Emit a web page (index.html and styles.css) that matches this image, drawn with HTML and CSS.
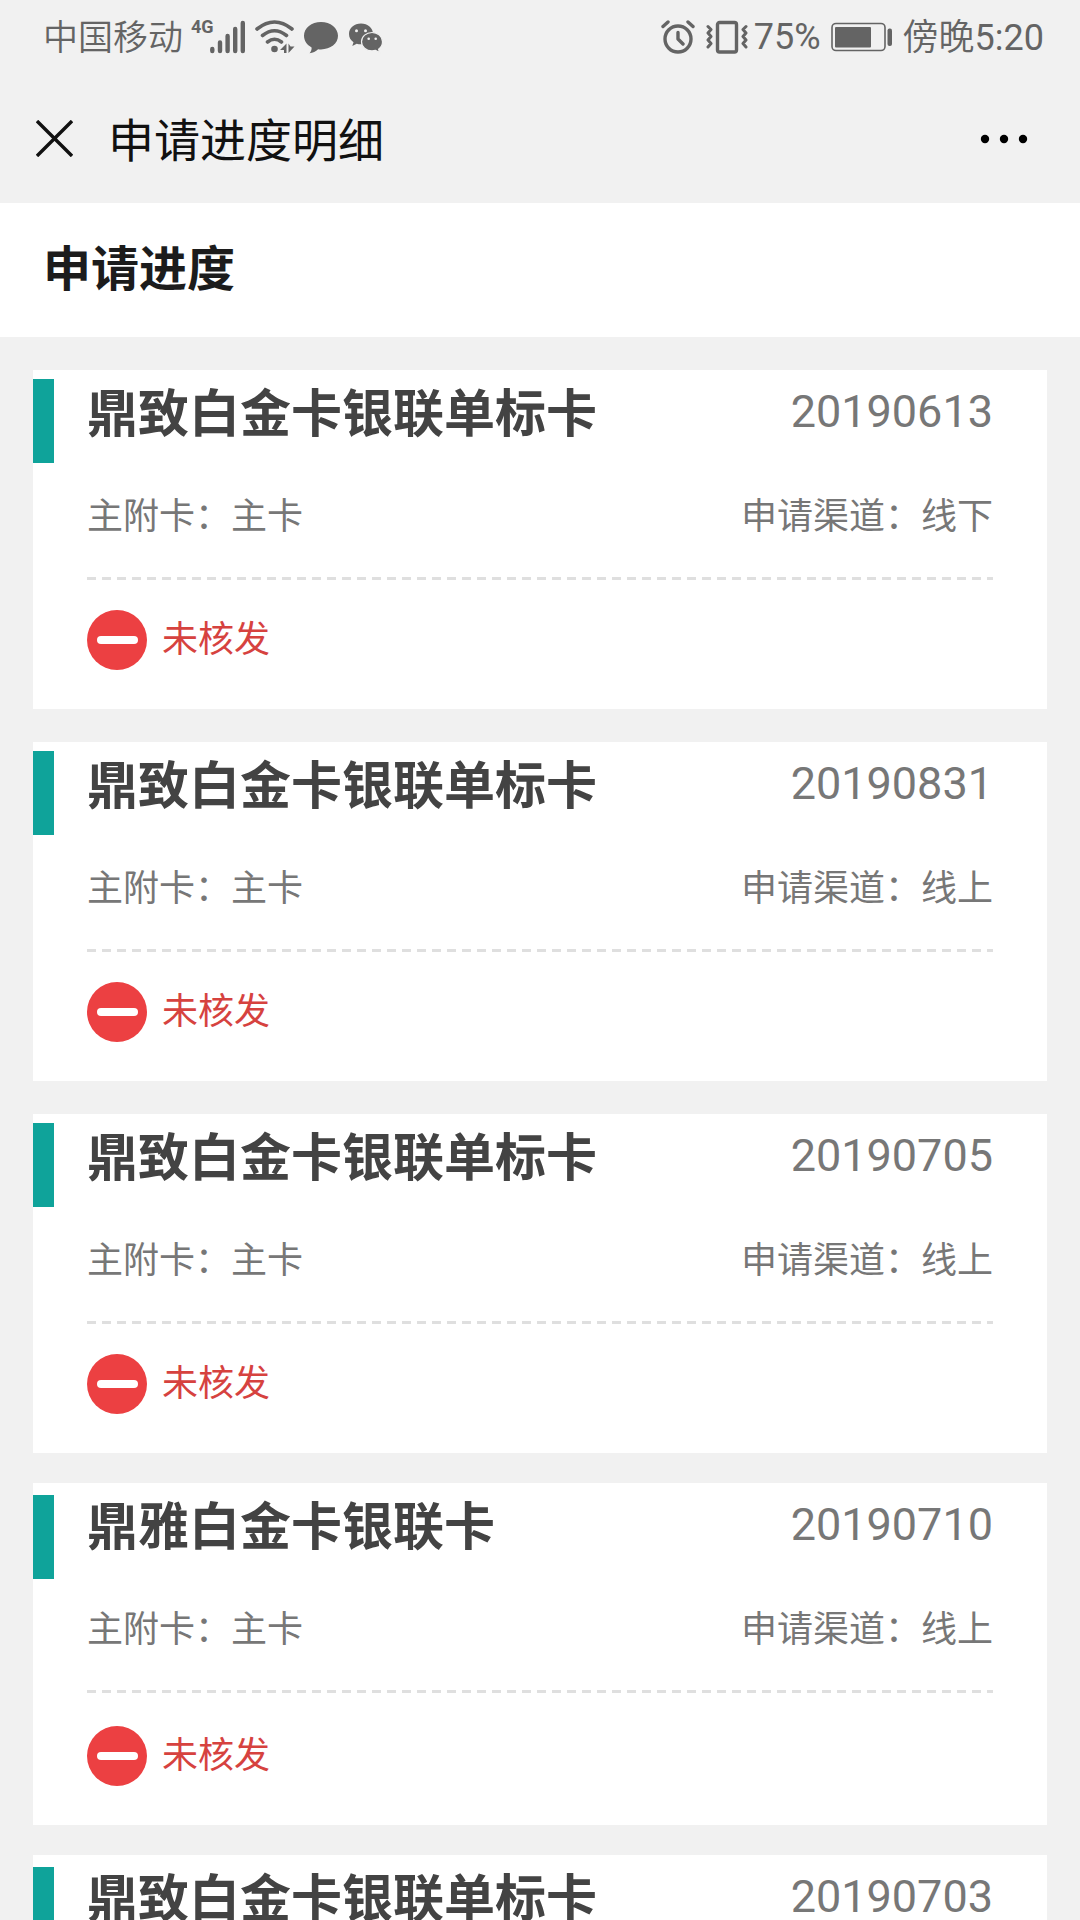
FILE: index.html
```html
<!DOCTYPE html>
<html lang="zh-CN">
<head>
<meta charset="utf-8">
<meta name="viewport" content="width=device-width, initial-scale=1">
<title>申请进度明细</title>
<link rel="stylesheet" href="styles.css">
</head>
<body>
<svg class="sprite" aria-hidden="true">
  <symbol id="icon-rejected" viewBox="0 0 60 60">
    <circle cx="30" cy="30" r="30" fill="#ec4042"/>
    <rect x="10" y="26" width="41" height="8" rx="4" fill="#fff"/>
  </symbol>
</svg>

<div class="statusbar">
  <div class="statusbar-side">
    <span class="carrier">中国移动</span>
    <span class="network">4G</span>
    <svg class="signal" width="35" height="34" viewBox="0 0 35 34" stroke="currentColor" stroke-width="4.4" stroke-linecap="round" aria-hidden="true">
      <path d="M2.3 29v2M10 22.5v8.5M17.6 16v15M25.2 9v22M32.8 3v28"/>
    </svg>
    <svg class="wifi" width="40" height="34" viewBox="0 0 40 34" fill="none" stroke="currentColor" stroke-width="3.6" stroke-linecap="round" aria-hidden="true">
      <path d="M2 9Q19.500-5 37 9M7.500 15.500q12-9.500 24 0M12.500 22q7-5.500 14 0"/>
      <circle cx="19.500" cy="29" r="3.300" fill="currentColor" stroke="none"/>
      <path d="M31.500 23.500v9.500h-2.500v-3h-4zM33.500 33v-9.500l2 3h4z" fill="currentColor" stroke="none"/>
    </svg>
    <svg class="bubble" width="34" height="34" viewBox="0 0 34 34" fill="currentColor" aria-hidden="true">
      <path d="M17 2C7.500 2 0 8 0 15.800c0 5 2.900 9.200 7.600 11.600.2 2-.6 4.200-2 5.900 3.200-.5 6.300-2 8.500-4.100 1 .2 1.900.2 2.900.2 9.500 0 17-5.900 17-13.600S26.500 2 17 2z"/>
    </svg>
    <svg class="wechat" width="34" height="34" viewBox="0 0 34 34" aria-hidden="true">
      <path fill="currentColor" d="M12 3.500C5.300 3.500 0 8 0 14c0 3.400 1.700 6.300 4.500 8.200L3.300 26l4.400-2.300c1.400.4 2.800.6 4.300.6 6.700 0 12-4.600 12-10.400S18.700 3.500 12 3.500z"/>
      <path fill="currentColor" stroke="#f1f1f1" stroke-width="1.200" d="M23 12.500c-5.800 0-10.500 4-10.500 9.200s4.700 9.200 10.500 9.200c1.300 0 2.500-.2 3.600-.5l4 2.200-1-3.400c2.400-1.700 3.900-4.400 3.900-7.500 0-5.200-4.700-9.200-10.500-9.200z"/>
      <g fill="#f1f1f1"><circle cx="7.500" cy="10.700" r="1.500"/><circle cx="16.500" cy="10.700" r="1.500"/><circle cx="19.700" cy="18.700" r="1.300"/><circle cx="26.700" cy="18.700" r="1.300"/></g>
    </svg>
  </div>
  <div class="statusbar-side">
    <svg class="alarm" width="34" height="34" viewBox="0 0 34 34" fill="none" stroke="currentColor" stroke-width="3.400" stroke-linecap="round" stroke-linejoin="round" aria-hidden="true">
      <circle cx="17" cy="19" r="13"/>
      <path d="M17 12.500v6.500l5 5M2 6.500l5-4.500M32 6.500l-5-4.500"/>
    </svg>
    <svg class="vibrate" width="42" height="34" viewBox="0 0 42 34" fill="none" stroke="currentColor" stroke-width="3.400" stroke-linecap="round" stroke-linejoin="round" aria-hidden="true">
      <rect x="11.500" y="2.500" width="19" height="29.500" rx="2"/>
      <path stroke-width="3" d="M2 6.500l3 3-3 3.500 3 3.500-3 3.500 3 3.500-3 3.500M40 6.500l-3 3 3 3.500-3 3.500 3 3.500-3 3.500 3 3.500"/>
    </svg>
    <span class="percent">75%</span>
    <svg class="battery" width="62" height="34" viewBox="0 0 62 34" fill="currentColor" aria-hidden="true">
      <rect x="1" y="3.500" width="53" height="27" rx="4" fill="none" stroke="currentColor" stroke-width="1.600"/>
      <rect x="4" y="7" width="36" height="20.500" rx="1"/>
      <rect x="56.500" y="8.500" width="4.500" height="17.500" rx="2"/>
    </svg>
    <span class="clock">傍晚<span class="digits">5:20</span></span>
  </div>
</div>

<header class="navbar">
  <button class="nav-button" type="button" aria-label="关闭">
    <svg width="37" height="37" viewBox="0 0 37 37" fill="none" stroke="#111" stroke-width="3.400" aria-hidden="true"><path d="M1 1l35 35M36 1L1 36"/></svg>
  </button>
  <h1 class="nav-title">申请进度明细</h1>
  <button class="nav-button" type="button" aria-label="更多">
    <svg width="48" height="10" viewBox="0 0 48 10" aria-hidden="true"><circle cx="5" cy="5" r="4.200"/><circle cx="24" cy="5" r="4.200"/><circle cx="43" cy="5" r="4.200"/></svg>
  </button>
</header>

<main>
  <h2 class="section-title">申请进度</h2>
  <div class="records">
    <article class="record">
      <div class="accent"></div>
      <div class="record-body">
        <div class="record-head"><h3 class="card-name">鼎致白金卡银联单标卡</h3><time class="date" datetime="2019-06-13">20190613</time></div>
        <div class="record-info"><span>主附卡：主卡</span><span>申请渠道：线下</span></div>
        <div class="record-status"><svg class="status-icon" aria-hidden="true"><use href="#icon-rejected"/></svg><span>未核发</span></div>
      </div>
    </article>
    <article class="record">
      <div class="accent"></div>
      <div class="record-body">
        <div class="record-head"><h3 class="card-name">鼎致白金卡银联单标卡</h3><time class="date" datetime="2019-08-31">20190831</time></div>
        <div class="record-info"><span>主附卡：主卡</span><span>申请渠道：线上</span></div>
        <div class="record-status"><svg class="status-icon" aria-hidden="true"><use href="#icon-rejected"/></svg><span>未核发</span></div>
      </div>
    </article>
    <article class="record">
      <div class="accent"></div>
      <div class="record-body">
        <div class="record-head"><h3 class="card-name">鼎致白金卡银联单标卡</h3><time class="date" datetime="2019-07-05">20190705</time></div>
        <div class="record-info"><span>主附卡：主卡</span><span>申请渠道：线上</span></div>
        <div class="record-status"><svg class="status-icon" aria-hidden="true"><use href="#icon-rejected"/></svg><span>未核发</span></div>
      </div>
    </article>
    <article class="record record-tall">
      <div class="accent"></div>
      <div class="record-body">
        <div class="record-head"><h3 class="card-name">鼎雅白金卡银联卡</h3><time class="date" datetime="2019-07-10">20190710</time></div>
        <div class="record-info"><span>主附卡：主卡</span><span>申请渠道：线上</span></div>
        <div class="record-status"><svg class="status-icon" aria-hidden="true"><use href="#icon-rejected"/></svg><span>未核发</span></div>
      </div>
    </article>
    <article class="record record-tall">
      <div class="accent"></div>
      <div class="record-body">
        <div class="record-head"><h3 class="card-name">鼎致白金卡银联单标卡</h3><time class="date" datetime="2019-07-03">20190703</time></div>
      </div>
    </article>
  </div>
</main>
</body>
</html>
```
FILE: styles.css
```css
* {
  box-sizing: border-box;
}

html {
  height: 100%;
  overflow: hidden;
}

body {
  height: 100%;
  margin: 0;
  overflow: hidden;
  background: #f1f1f1;
  color: #777;
  font-family: Roboto, "Noto Sans CJK SC", sans-serif;
  font-size: 36px;
}

h1,
h2,
h3 {
  margin: 0;
}

svg {
  display: block;
  flex: none;
}

.sprite {
  position: absolute;
  width: 0;
  height: 0;
}

/* System status bar */
.statusbar {
  display: flex;
  justify-content: space-between;
  height: 74px;
  padding: 0 36px 0 43px;
  color: #646464;
  font-weight: 350;
  line-height: 70px;
}

.statusbar-side {
  display: flex;
  align-items: center;
}

.carrier {
  padding-top: 4px;
  font-size: 35px;
}

.network {
  align-self: flex-start;
  margin: 16px -4px 0 8px;
  font-family: "Liberation Sans Narrow", Roboto, sans-serif;
  font-size: 18px;
  font-weight: 700;
  line-height: 22px;
}

.wifi {
  margin-left: 10px;
}

.bubble {
  margin-left: 9px;
}

.wechat {
  margin-left: 11px;
}

.vibrate {
  margin-left: 11px;
}

.percent,
.digits {
  font-weight: 400;
}

.percent {
  margin-left: 6px;
}

.battery {
  margin: 0 10px;
}

.clock {
  padding-top: 2px;
}

/* Page navigation */
.navbar {
  display: flex;
  align-items: center;
  height: 129px;
  padding: 0 52px 0 36px;
}

.nav-button {
  padding: 0;
  border: 0;
  background: none;
}

.nav-title {
  flex: 1;
  margin-left: 35px;
  padding-top: 4px;
  color: #111;
  font-size: 46px;
  font-weight: 400;
  line-height: 64px;
}

.section-title {
  padding: 31px 43px;
  background: #fff;
  color: #1c1c1c;
  font-size: 48px;
  font-weight: 700;
  line-height: 72px;
}

/* Application records */
.records {
  display: flex;
  flex-direction: column;
  gap: 30px;
  padding: 33px;
}

.record {
  display: flex;
  background: #fff;
}

.record:not(.record-tall) + .record:not(.record-tall) {
  margin-top: 3px;
}

.accent {
  width: 21px;
  height: 84px;
  margin-top: 9px;
  background: #0fa39a;
}

.record-tall .accent {
  margin-top: 12px;
}

.record-body {
  flex: 1;
  padding: 0 54px 9px 33px;
}

.record-tall .record-body {
  padding-bottom: 6px;
}

.record-head,
.record-info {
  display: flex;
  align-items: flex-start;
  justify-content: space-between;
}

.card-name {
  color: #434343;
  font-size: 51px;
  font-weight: 700;
  line-height: 90px;
}

.date {
  font-size: 45px;
  line-height: 84px;
}

.record-info {
  padding: 30px 0 33px;
  line-height: 54px;
}

.record-status {
  display: flex;
  align-items: center;
  gap: 15px;
  height: 123px;
  padding-top: 3px;
  background: repeating-linear-gradient(90deg, #dfdfdf 0 9px, #fff 9px 15px) top / 100% 3px no-repeat;
  color: #d6423f;
  line-height: 54px;
}

.record-tall .record-status {
  height: 129px;
}

.status-icon {
  width: 60px;
  height: 60px;
}
```
